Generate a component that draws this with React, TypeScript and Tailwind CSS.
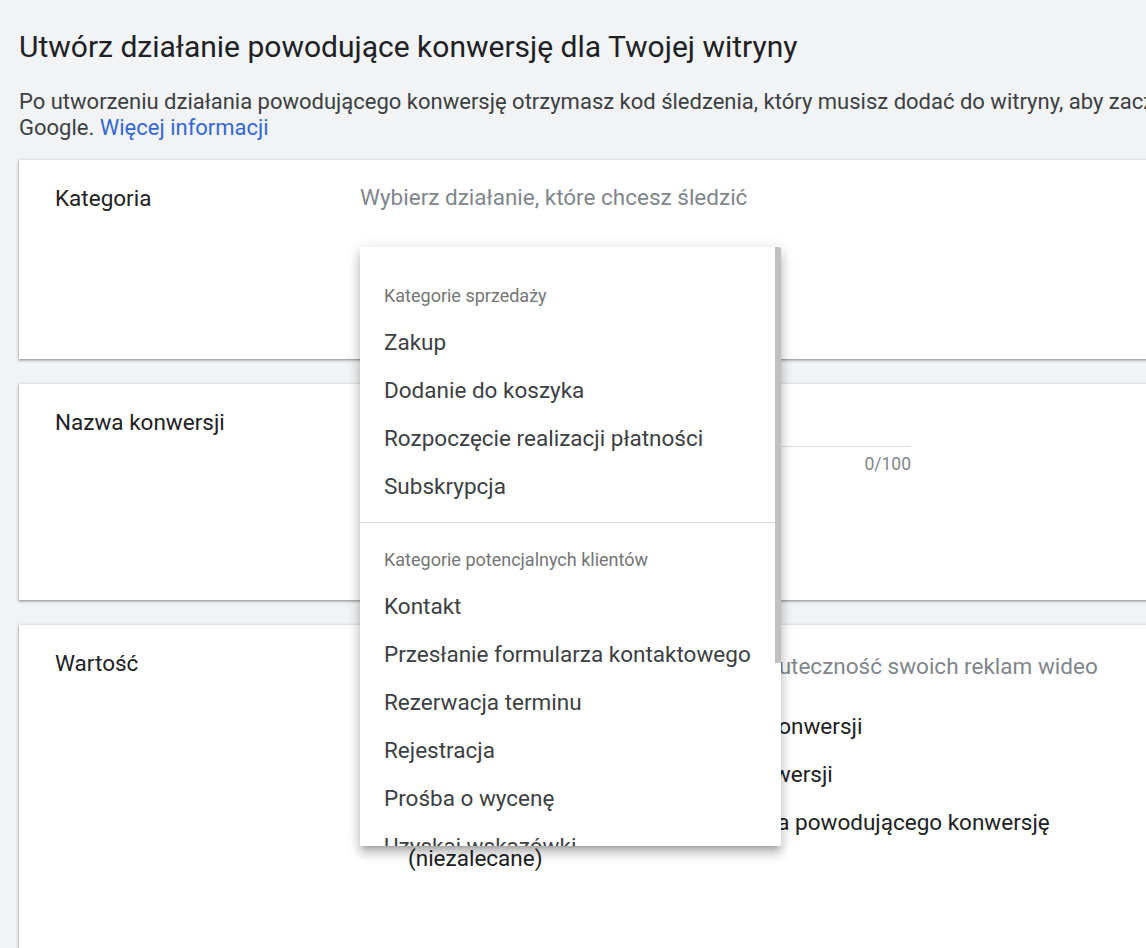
import React from 'react';

const salesItems = ['Zakup', 'Dodanie do koszyka', 'Rozpoczęcie realizacji płatności', 'Subskrypcja'];
const leadItems = [
  'Kontakt',
  'Przesłanie formularza kontaktowego',
  'Rezerwacja terminu',
  'Rejestracja',
  'Prośba o wycenę',
  'Uzyskaj wskazówki',
  'Inne',
];

const valueOptions = [
  'Użyj tej samej wartości dla każdej z konwersji',
  'Użyj różnych wartości dla każdej konwersji',
  'Nie używaj wartości dla tego działania powodującego konwersję (niezalecane)',
];

const cardShadow = 'shadow-[0_1px_2px_rgba(0,0,0,0.3),0_1px_3px_1px_rgba(0,0,0,0.15)]';

const CategoryMenu: React.FC = () => (
  <div className="absolute left-[341px] top-[87px] z-10 w-[421px] h-[599px] bg-white rounded-[2px] overflow-hidden shadow-[0_5px_5px_-3px_rgba(0,0,0,0.2),0_8px_10px_1px_rgba(0,0,0,0.14),0_3px_14px_2px_rgba(0,0,0,0.12)]">
    <div className="pt-[24px]">
      <div className="h-12 flex items-center pl-[24px] text-[18px] text-[#757575]">Kategorie sprzedaży</div>
      {salesItems.map((item) => (
        <div key={item} className="h-12 flex items-center pl-[24px] text-[22.5px] text-[#3c4043] whitespace-nowrap">
          {item}
        </div>
      ))}
      <div className="mt-[11px] mb-[12px] border-t border-[#e0e0e0]" />
      <div className="h-12 flex items-center pl-[24px] text-[18px] text-[#757575]">Kategorie potencjalnych klientów</div>
      {leadItems.map((item) => (
        <div key={item} className="h-12 flex items-center pl-[24px] text-[22.5px] text-[#3c4043] whitespace-nowrap">
          {item}
        </div>
      ))}
    </div>
    {/* scrollbar thumb */}
    <div className="absolute right-0 top-0 w-[6px] h-[416px] bg-[#c1c1c1]" />
  </div>
);

export default function App() {
  return (
    <div className="w-[1146px] h-[948px] overflow-hidden bg-[#f1f3f4] font-['Roboto',sans-serif]">
      <div className="w-[1200px] px-[19px]">
        <h1 className="pt-[29px] text-[30px] leading-[36px] text-[#202124]">
          Utwórz działanie powodujące konwersję dla Twojej witryny
        </h1>
        <p className="mt-[24px] text-[22px] leading-[26px] text-[#3c4043] whitespace-nowrap">
          Po utworzeniu działania powodującego konwersję otrzymasz kod śledzenia, który musisz dodać do witryny, aby zacząć mierzyć konwersje w Google Ads.
          <br />
          Google. <span className="text-[#3367d6]">Więcej informacji</span>
        </p>

        <div className={`relative mt-[19px] h-[199px] bg-white flex ${cardShadow}`}>
          <div className="w-[341px] pl-[36px] pt-[24px] text-[22.5px] leading-[28px] text-[#202124]">Kategoria</div>
          <div className="pt-[23px] text-[22.5px] leading-[28px] text-[#80868b]">Wybierz działanie, które chcesz śledzić</div>
          <CategoryMenu />
        </div>

        <div className={`mt-[25px] h-[216px] bg-white flex ${cardShadow}`}>
          <div className="w-[341px] pl-[36px] pt-[24px] text-[22.5px] leading-[28px] text-[#202124]">Nazwa konwersji</div>
          <div className="pt-[26px] w-[551px]">
            <div className="h-[37px] border-b border-[#dadce0]" />
            <div className="mt-[7px] text-right text-[17.5px] leading-[20px] text-[#80868b]">0/100</div>
          </div>
        </div>

        <div className={`mt-[25px] h-[400px] bg-white flex ${cardShadow}`}>
          <div className="w-[341px] pl-[36px] pt-[24px] text-[22.5px] leading-[28px] text-[#202124]">Wartość</div>
          <div className="pt-[27px] w-[760px]">
            <div className="text-[22.5px] leading-[28px] text-[#80868b] whitespace-nowrap">
              Nadaj wartość konwersjom, by mierzyć skuteczność swoich reklam wideo
            </div>
            <div className="mt-[28px] flex flex-col gap-[12px]">
              {valueOptions.map((opt) => (
                <label key={opt} className="flex items-start gap-[28px] text-[22.5px] leading-[36px] text-[#202124]">
                  <span className="mt-[8px] shrink-0 w-[20px] h-[20px] rounded-full border-2 border-[#5f6368]" />
                  <span>{opt}</span>
                </label>
              ))}
            </div>
          </div>
        </div>
      </div>
    </div>
  );
}
